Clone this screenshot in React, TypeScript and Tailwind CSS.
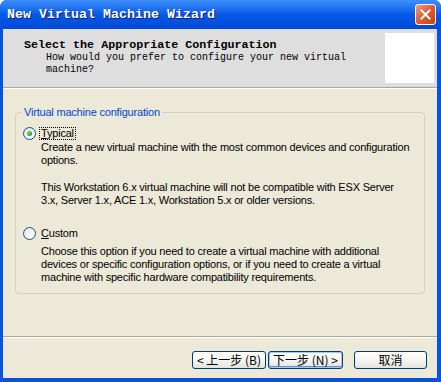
const sans = "font-['Tahoma','Liberation_Sans',Arial,sans-serif]"
const mono = "font-['Liberation_Mono','Courier_New',monospace]"
const cjk = "font-['Noto_Sans_CJK_SC','Liberation_Sans',sans-serif]"

function Radio({ checked }: { checked?: boolean }) {
  return (
    <span className="relative flex h-[13px] w-[13px] shrink-0 items-center justify-center rounded-full border border-[#1c5180] bg-gradient-to-br from-[#dcdcd7] via-[#f5f5f2] to-white">
      {checked && (
        <span className="h-[5px] w-[5px] rounded-full bg-[radial-gradient(circle_at_35%_35%,#7fe07f,#21a121_70%)]" />
      )}
    </span>
  )
}

function XpButton({
  children,
  isDefault,
  className,
}: {
  children: React.ReactNode
  isDefault?: boolean
  className?: string
}) {
  return (
    <button
      type="button"
      className={
        "flex h-[18px] items-center justify-center whitespace-pre rounded-[3px] border border-[#003c74] bg-gradient-to-b from-white via-[#f6f5f1] to-[#e3e2da] text-[12px] leading-none text-black " +
        cjk +
        (isDefault ? " shadow-[inset_0_0_0_1px_#a9c7f4,inset_0_-1px_0_1px_#5f8fd8]" : "") +
        " " +
        (className ?? "")
      }
    >
      {children}
    </button>
  )
}

export default function App() {
  return (
    <div className="flex h-[382px] w-[441px] flex-col overflow-hidden rounded-t-[7px] bg-[#0a52e0]">
      {/* title bar */}
      <div className="flex h-[29px] shrink-0 items-center justify-between bg-gradient-to-b from-[#3d8ffb] via-[#0559e8] to-[#0249d6] pl-[7px] pr-[5px]">
        <span
          className={
            "text-[13.33px] font-bold leading-none text-white [text-shadow:1px_1px_0_#0a1e6a] " + mono
          }
        >
          New Virtual Machine Wizard
        </span>
        <div className="flex h-[21px] w-[21px] items-center justify-center rounded-[3px] border border-white bg-gradient-to-br from-[#f09a7a] via-[#e2582e] to-[#c9401c]">
          <svg width="11" height="11" viewBox="0 0 11 11">
            <path d="M1.5 1.5 L9.5 9.5 M9.5 1.5 L1.5 9.5" stroke="white" strokeWidth="2" strokeLinecap="square" />
          </svg>
        </div>
      </div>

      {/* client area */}
      <div className="mb-[4px] ml-[3px] mr-[4px] flex flex-1 flex-col bg-[#ece9d8]">
        {/* header */}
        <div className="flex h-[58px] shrink-0 justify-between bg-[#dedede] pr-[3px] pt-[4px]">
          <div className="pl-[21px] pt-[5px]">
            <div className={"text-[11.7px] font-bold leading-[14px] text-black " + mono}>
              Select the Appropriate Configuration
            </div>
            <div className={"pl-[22px] text-[10px] leading-[12px] text-black " + mono}>
              How would you prefer to configure your new virtual
              <br />
              machine?
            </div>
          </div>
          <div className="h-[50px] w-[49px] bg-white" />
        </div>
        <div className="h-px bg-[#aca899]" />
        <div className="h-px bg-white" />

        {/* body */}
        <div className="flex flex-1 flex-col px-[12px] pt-[23px]">
          <div
            className={
              "relative h-[182px] rounded-[4px] border border-[#d0d0bf] text-[11px] tracking-[-0.2px] text-black " +
              sans
            }
          >
            <span className="absolute -top-[8px] left-[6px] bg-[#ece9d8] px-[2px] leading-[14px] text-[#0046d5]">
              Virtual machine configuration
            </span>
            <div className="flex flex-col whitespace-nowrap pl-[7px] pt-[14px]">
              <div className="flex items-center gap-[3px]">
                <Radio checked />
                <span className="border border-dotted border-black px-px leading-[11px]">
                  <span className="underline">T</span>ypical
                </span>
              </div>
              <div className="mt-[1px] pl-[18px] leading-[13.3px]">
                Create a new virtual machine with the most common devices and configuration
                <br />
                options.
                <br />
                <br />
                This Workstation 6.x virtual machine will not be compatible with ESX Server
                <br />
                3.x, Server 1.x, ACE 1.x, Workstation 5.x or older versions.
              </div>

              <div className="mt-[20px] flex items-center gap-[4px]">
                <Radio />
                <span className="px-px leading-[13px]">
                  <span className="underline">C</span>ustom
                </span>
              </div>
              <div className="mt-[5px] pl-[18px] leading-[12.6px]">
                Choose this option if you need to create a virtual machine with additional
                <br />
                devices or specific configuration options, or if you need to create a virtual
                <br />
                machine with specific hardware compatibility requirements.
              </div>
            </div>
          </div>
        </div>

        {/* footer */}
        <div className="h-px bg-[#aca899]" />
        <div className="h-px bg-white" />
        <div className="flex h-[40px] shrink-0 items-start justify-end gap-[2px] pr-[10px] pt-[13px]">
          <XpButton className="w-[74px]">{"< 上一步 (B)"}</XpButton>
          <XpButton isDefault className="w-[75px]">{"下一步 (N) >"}</XpButton>
          <XpButton className="ml-[9px] w-[73px]">取消</XpButton>
        </div>
      </div>
    </div>
  )
}
